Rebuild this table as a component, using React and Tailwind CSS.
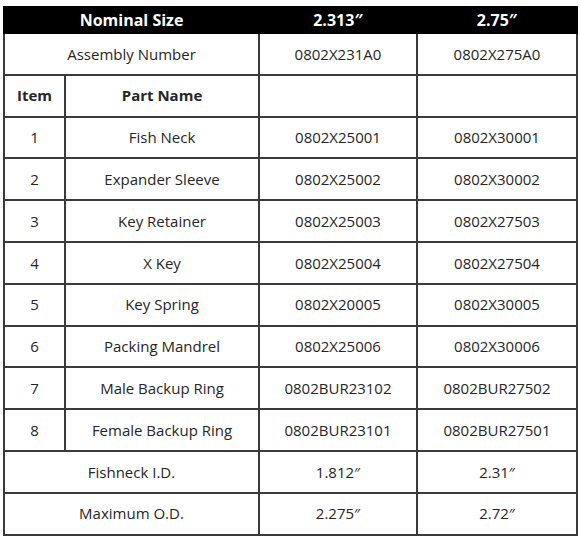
import React from "react";

const parts = [
  ["1", "Fish Neck", "0802X25001", "0802X30001"],
  ["2", "Expander Sleeve", "0802X25002", "0802X30002"],
  ["3", "Key Retainer", "0802X25003", "0802X27503"],
  ["4", "X Key", "0802X25004", "0802X27504"],
  ["5", "Key Spring", "0802X20005", "0802X30005"],
  ["6", "Packing Mandrel", "0802X25006", "0802X30006"],
  ["7", "Male Backup Ring", "0802BUR23102", "0802BUR27502"],
  ["8", "Female Backup Ring", "0802BUR23101", "0802BUR27501"],
];

const cell = "border-2 border-[#3a3a3a] text-center align-middle h-[41.8px] p-0";
const head = "border-2 border-black p-0 text-[16px]";

export default function App() {
  return (
    <div className="bg-white w-[580px] h-[542px] pt-[6px] pl-[3px]" style={{ fontFamily: '"Open Sans", sans-serif' }}>
      <table className="table-fixed border-collapse w-[573px] text-[15px] text-[#262626]">
        <colgroup>
          <col className="w-[61px]" />
          <col className="w-[194px]" />
          <col className="w-[158px]" />
          <col className="w-[160px]" />
        </colgroup>
        <thead>
          <tr className="bg-black text-white font-bold">
            <th colSpan={2} className={head + " h-[26px]"}>Nominal Size</th>
            <th className={head}>2.313″</th>
            <th className={head}>2.75″</th>
          </tr>
        </thead>
        <tbody>
          <tr>
            <td colSpan={2} className={cell}>Assembly Number</td>
            <td className={cell}>0802X231A0</td>
            <td className={cell}>0802X275A0</td>
          </tr>
          <tr className="font-bold">
            <td className={cell}>Item</td>
            <td className={cell}>Part Name</td>
            <td className={cell}></td>
            <td className={cell}></td>
          </tr>
          {parts.map((p) => (
            <tr key={p[0]}>
              {p.map((v, i) => (
                <td key={i} className={cell}>{v}</td>
              ))}
            </tr>
          ))}
          <tr>
            <td colSpan={2} className={cell}>Fishneck I.D.</td>
            <td className={cell}>1.812″</td>
            <td className={cell}>2.31″</td>
          </tr>
          <tr>
            <td colSpan={2} className={cell}>Maximum O.D.</td>
            <td className={cell}>2.275″</td>
            <td className={cell}>2.72″</td>
          </tr>
        </tbody>
      </table>
    </div>
  );
}
